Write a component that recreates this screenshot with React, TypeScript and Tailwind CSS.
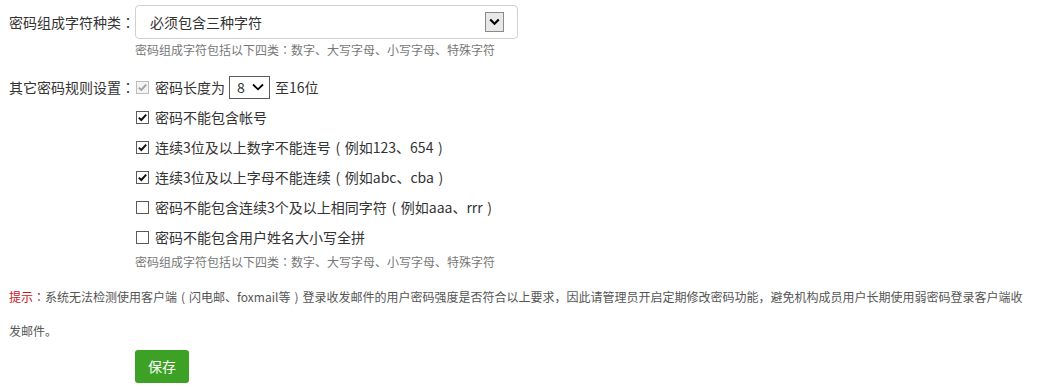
import React from "react";

const TC = { fontFamily: '"Noto Sans CJK TC", "Noto Sans CJK SC", sans-serif' };

function T({ children }: { children: string }) {
  const parts: React.ReactNode[] = [];
  let buf = "";
  let k = 0;
  const flush = () => {
    if (buf) parts.push(<React.Fragment key={k++}>{buf}</React.Fragment>);
    buf = "";
  };
  for (const ch of children) {
    if (ch === "：") {
      flush();
      parts.push(
        <span key={k++} style={TC}>
          {ch}
        </span>
      );
    } else if (ch === "（" || ch === "）") {
      flush();
      parts.push(
        <span key={k++} className="inline-block w-[1em] text-center">
          {ch === "（" ? "(" : ")"}
        </span>
      );
    } else {
      buf += ch;
    }
  }
  flush();
  return <>{parts}</>;
}

function Check({ state }: { state: "on" | "off" | "disabled" }) {
  if (state === "disabled") {
    return (
      <span className="ml-[1px] mr-[6px] flex h-[13px] w-[13px] shrink-0 items-center justify-center border border-[#bcbcbc] bg-[#f4f4f4]">
        <svg width="11" height="11" viewBox="0 0 11 11">
          <path d="M1.8 5.6 L4.3 8 L9.2 2.6" fill="none" stroke="#a0a0a0" strokeWidth="1.9" />
        </svg>
      </span>
    );
  }
  return (
    <span className="ml-[1px] mr-[6px] flex h-[13px] w-[13px] shrink-0 items-center justify-center border border-[#5a5a5a] bg-white">
      {state === "on" && (
        <svg width="11" height="11" viewBox="0 0 11 11">
          <path d="M1.8 5.6 L4.3 8 L9.2 2.6" fill="none" stroke="#111" strokeWidth="2" />
        </svg>
      )}
    </span>
  );
}

function Row({ state, text }: { state: "on" | "off"; text: string }) {
  return (
    <div className="flex h-[30px] items-center pl-[126px] text-[14px]">
      <Check state={state} />
      <span>
        <T>{text}</T>
      </span>
    </div>
  );
}

export default function App() {
  return (
    <div
      className="w-[1038px] h-[390px] overflow-hidden bg-white pl-[9px] pt-[5px] text-[#333]"
      style={{ fontFamily: '"Noto Sans CJK SC", "Microsoft YaHei", sans-serif' }}
    >
      <div className="flex h-[34px] items-center">
        <div className="w-[126px] text-[14px]">
          <T>密码组成字符种类：</T>
        </div>
        <div className="flex h-[34px] w-[383px] items-center justify-between rounded-[4px] border border-[#d0d0d0] pl-[14px] pr-[13px] text-[14px]">
          <span>必须包含三种字符</span>
          <span className="flex h-[20px] w-[19px] items-center justify-center border border-[#8a8a8a] bg-[#e8e8e8]">
            <svg width="11" height="8" viewBox="0 0 11 8">
              <path d="M1.2 1.5 L5.5 5.8 L9.8 1.5" fill="none" stroke="#000" strokeWidth="2.2" />
            </svg>
          </span>
        </div>
      </div>
      <div className="mt-[3px] h-[16px] pl-[126px] text-[12px] leading-[16px] text-[#777]">
        <T>密码组成字符包括以下四类：数字、大写字母、小写字母、特殊字符</T>
      </div>
      <div className="mt-[14px] flex h-[30px] items-center text-[14px]">
        <div className="w-[126px]">
          <T>其它密码规则设置：</T>
        </div>
        <Check state="disabled" />
        <span>密码长度为</span>
        <div className="ml-[4px] flex h-[23px] w-[41px] items-center justify-between border border-[#5a5a5a] pl-[7px] pr-[5px]">
          <span>8</span>
          <svg width="12" height="8" viewBox="0 0 12 8">
            <path d="M1 1.5 L6 6.3 L11 1.5" fill="none" stroke="#000" strokeWidth="1.8" />
          </svg>
        </div>
        <span className="ml-[5px]">至16位</span>
      </div>
      <Row state="on" text="密码不能包含帐号" />
      <Row state="on" text="连续3位及以上数字不能连号（例如123、654）" />
      <Row state="on" text="连续3位及以上字母不能连续（例如abc、cba）" />
      <Row state="off" text="密码不能包含连续3个及以上相同字符（例如aaa、rrr）" />
      <Row state="off" text="密码不能包含用户姓名大小写全拼" />
      <div className="mt-[2px] h-[16px] pl-[126px] text-[12px] leading-[16px] text-[#777]">
        <T>密码组成字符包括以下四类：数字、大写字母、小写字母、特殊字符</T>
      </div>
      <div className="mt-[10px] whitespace-nowrap text-[12px] leading-[34px] text-[#555]">
        <span className="text-[#c8161d]">
          <T>提示：</T>
        </span>
        <T>
          系统无法检测使用客户端（闪电邮、foxmail等）登录收发邮件的用户密码强度是否符合以上要求，因此请管理员开启定期修改密码功能，避免机构成员用户长期使用弱密码登录客户端收
        </T>
        <br />
        发邮件。
      </div>
      <div className="mt-[2px] pl-[126px]">
        <button className="h-[33px] w-[54px] rounded-[3px] bg-[#3ca125] text-[14px] text-white">保存</button>
      </div>
    </div>
  );
}
